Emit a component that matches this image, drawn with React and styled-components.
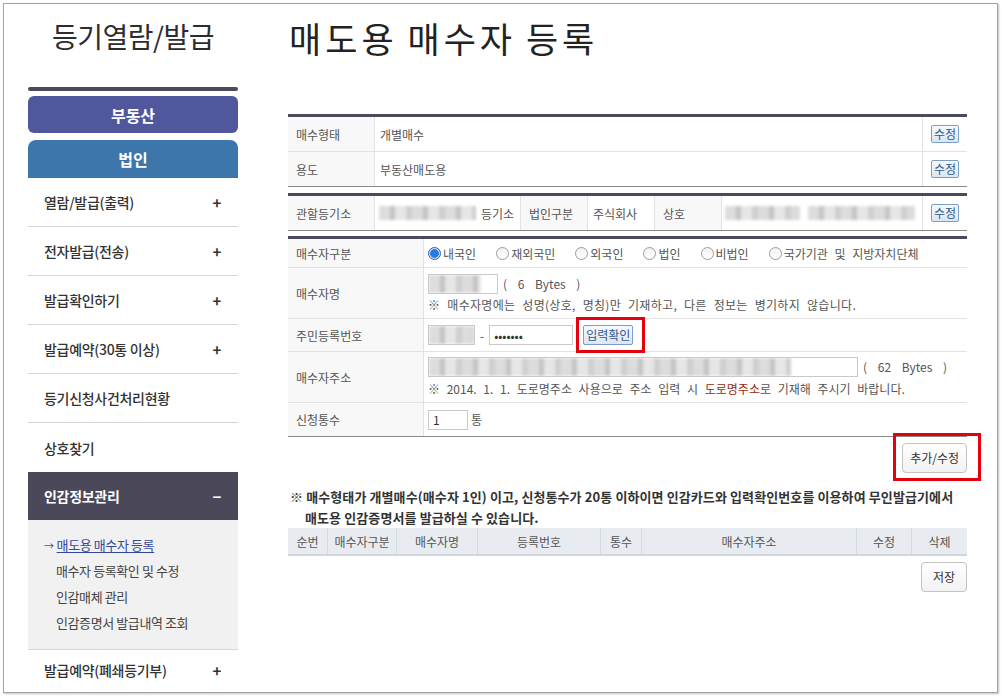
import React from "react";
import styled, { createGlobalStyle } from "styled-components";

const FONT = `"Noto Sans CJK KR", "Noto Sans", sans-serif`;

const GlobalStyle = createGlobalStyle`
  html, body { margin: 0; padding: 0; background: #fff; }
  body { font-family: ${FONT}; color: #333; }
  * { box-sizing: border-box; }
`;

const Frame = styled.div`
  margin: 3px;
  width: 995px;
  height: 690px;
  border: 1px solid #a3a3a3;
  box-shadow: 1px 1px 2px rgba(0, 0, 0, 0.25);
  display: flex;
  padding: 0 29px 0 24px;
  overflow: hidden;
`;

/* ---------- sidebar ---------- */
const Sidebar = styled.aside`
  width: 210px;
  flex: none;
  display: flex;
  flex-direction: column;
`;

const SideTitle = styled.h2`
  margin: 0;
  height: 83px;
  padding-top: 12px;
  font-size: 28px;
  line-height: 40px;
  font-weight: 400;
  letter-spacing: -0.5px;
  text-align: center;
  color: #2d2d2d;
`;

const SideRule = styled.div`
  height: 4px;
  border-radius: 2px;
  background: #4a4a5c;
`;

const CategoryTab = styled.div`
  margin-top: ${(p) => p.$gap}px;
  height: ${(p) => p.$h}px;
  display: flex;
  align-items: center;
  justify-content: center;
  color: #fff;
  font-size: 16px;
  font-weight: 700;
  background: ${(p) => p.$bg};
  border-radius: ${(p) => (p.$flat ? "8px 8px 0 0" : "6px")};
`;

const MenuRow = styled.div`
  height: ${(p) => p.$h || 49}px;
  display: flex;
  align-items: center;
  justify-content: space-between;
  padding: 0 17px 0 16px;
  font-size: 14px;
  color: ${(p) => (p.$open ? "#fff" : "#333")};
  font-weight: ${(p) => (p.$open ? 700 : 500)};
  background: ${(p) => (p.$open ? "#4a4859" : "transparent")};
  border-bottom: ${(p) => (p.$line ? "1px solid #d6d6d6" : "none")};
  letter-spacing: -0.3px;
`;

const Sign = styled.span`
  font-size: 15px;
  font-weight: 700;
  line-height: 1;
`;

const SubList = styled.div`
  background: #f1f1f1;
  padding: 12px 0 13px 16px;
  border-bottom: 1px solid #d6d6d6;
`;

const SubLink = styled.div`
  height: 26px;
  line-height: 26px;
  font-size: 13px;
  letter-spacing: -0.4px;
  color: ${(p) => (p.$active ? "#34489c" : "#444")};
  padding-left: ${(p) => (p.$active ? 0 : 12)}px;

  small {
    font-size: 10px;
    margin-right: 3px;
    color: #555;
  }

  u {
    text-underline-offset: 2px;
  }
`;

/* ---------- main ---------- */
const Main = styled.main`
  width: 679px;
  margin-left: 50px;
  display: flex;
  flex-direction: column;
`;

const PageTitle = styled.h1`
  margin: 0;
  height: 110px;
  padding: 12px 0 0 1px;
  font-size: 35px;
  line-height: 44px;
  font-weight: 400;
  letter-spacing: 4px;
  word-spacing: -2px;
  color: #222;
`;

const FormTable = styled.div`
  border-top: 3px solid #4a4a5c;
  border-bottom: 1px solid #8a8a8a;
  margin-bottom: ${(p) => p.$mb || 0}px;
`;

const Row = styled.div`
  display: flex;
  height: ${(p) => p.$h}px;
  border-bottom: 1px solid #e2e2e2;

  &:last-child {
    border-bottom: none;
  }
`;

const Label = styled.div`
  width: ${(p) => p.$w}px;
  flex: none;
  display: flex;
  align-items: center;
  padding-left: 8px;
  background: #f8f8f8;
  border-right: 1px solid #e2e2e2;
  font-size: 12px;
  color: #555;
`;

const Value = styled.div`
  width: ${(p) => (p.$w ? `${p.$w}px` : "auto")};
  flex: ${(p) => (p.$w ? "none" : 1)};
  display: flex;
  flex-direction: ${(p) => (p.$stack ? "column" : "row")};
  justify-content: ${(p) => (p.$stack ? "center" : "flex-start")};
  align-items: ${(p) => (p.$stack ? "flex-start" : "center")};
  gap: ${(p) => p.$gap || 0}px;
  padding-left: ${(p) => p.$pl ?? 5}px;
  border-right: ${(p) => (p.$line ? "1px solid #e2e2e2" : "none")};
  font-size: 12px;
  word-spacing: 4px;
  color: #555;
`;

const BtnCell = styled.div`
  width: 45px;
  flex: none;
  display: flex;
  align-items: center;
  justify-content: center;
  border-left: 1px solid #e2e2e2;
`;

const Line = styled.div`
  display: flex;
  align-items: center;
  line-height: 16px;
  white-space: pre;
  letter-spacing: ${(p) => p.$ls || 0}px;
`;

const SmallBtn = styled.button`
  height: ${(p) => p.$h || 18}px;
  padding: 0 2px;
  border: 1px solid #7d9ec4;
  border-radius: 2px;
  background: linear-gradient(#f6f9fd, #dbe6f2);
  color: #2e5a8e;
  font: 12px/1 ${FONT};
  cursor: pointer;
`;

const GrayBtn = styled.button`
  height: 30px;
  padding: 0 ${(p) => p.$px}px;
  border: 1px solid #c4c4c4;
  border-radius: 4px;
  background: linear-gradient(#fff, #f2f2f2);
  color: #333;
  font: 12px/1 ${FONT};
  cursor: pointer;
`;

const Highlight = styled.span`
  position: relative;
  display: inline-flex;

  &::after {
    content: "";
    position: absolute;
    top: -${(p) => p.$t}px;
    right: -${(p) => p.$r}px;
    bottom: -${(p) => p.$b}px;
    left: -${(p) => p.$l}px;
    border: 3px solid #e5000c;
    pointer-events: none;
  }
`;

const Blur = styled.span`
  display: inline-block;
  width: ${(p) => p.$w}px;
  height: ${(p) => p.$h || 14}px;
  background: repeating-linear-gradient(
    90deg,
    #dcdcdc 0 11px,
    #c4c4c4 11px 16px,
    #e6e6e6 16px 27px,
    #cfcfcf 27px 33px
  );
  filter: blur(1.6px);
  flex: none;
`;

const FakeInput = styled.div`
  width: ${(p) => p.$w}px;
  height: 20px;
  border: 1px solid #c9c9c9;
  display: flex;
  align-items: center;
  overflow: hidden;
  flex: none;
  background: #fff;
`;

const Field = styled.input`
  width: ${(p) => p.$w}px;
  height: 20px;
  border: 1px solid #c9c9c9;
  padding: 0 4px;
  font: 12px ${FONT};
  color: #333;
  outline: none;
  flex: none;
`;

const Dash = styled.span`
  margin: 0 5px;
`;

const Bytes = styled.span`
  margin-left: 5px;
  word-spacing: 8px;
  color: #555;
`;

const Red = styled.span`
  color: #9a2a06;
`;

const RadioGroup = styled.div`
  display: flex;
  align-items: center;
`;

const Radio = styled.label`
  display: flex;
  align-items: center;
  gap: 2px;
  margin-right: 20px;
  color: #555;
  font-size: 12px;
`;

const RadioDot = styled.span`
  width: 13px;
  height: 13px;
  border-radius: 50%;
  border: 1px solid ${(p) => (p.$on ? "#1c5fb8" : "#9c9c9c")};
  background: ${(p) =>
    p.$on
      ? "radial-gradient(circle, #2a7ae2 0 52%, #d3e4fa 60%)"
      : "linear-gradient(#f1f1f1, #fff)"};
`;

const ConfirmSlot = styled.span`
  margin-left: 10px;
  display: inline-flex;
`;

const ButtonRow = styled.div`
  display: flex;
  justify-content: flex-end;
  margin-top: ${(p) => p.$mt}px;
`;

const Notice = styled.div`
  margin-top: 13px;
  font-size: 13px;
  font-weight: 700;
  line-height: 21px;
  letter-spacing: 0.1px;
  color: #333;
  white-space: nowrap;
  padding-left: 2px;
`;

const Indent = styled.div`
  padding-left: 15px;
`;

const ListHead = styled.div`
  display: grid;
  grid-template-columns: 40px 69px 81px 123px 41px 215px 55px 55px;
  height: 28px;
  background: #e8ecf1;
  border-bottom: 2px solid #cfd6de;
`;

const HeadCell = styled.div`
  display: flex;
  align-items: center;
  justify-content: center;
  font-size: 12px;
  color: #555;
  border-right: 1px solid #d4dae2;

  &:last-child {
    border-right: none;
  }
`;

const menu = [
  { label: "열람/발급(출력)", sign: "+", line: true },
  { label: "전자발급(전송)", sign: "+", line: true },
  { label: "발급확인하기", sign: "+", line: true },
  { label: "발급예약(30통 이상)", sign: "+", line: true },
  { label: "등기신청사건처리현황", line: true },
  { label: "상호찾기" },
];

const subMenu = [
  "매수자 등록확인 및 수정",
  "인감매체 관리",
  "인감증명서 발급내역 조회",
];

const buyerTypes = [
  "내국인",
  "재외국민",
  "외국인",
  "법인",
  "비법인",
  "국가기관 및 지방자치단체",
];

const listCols = [
  "순번",
  "매수자구분",
  "매수자명",
  "등록번호",
  "통수",
  "매수자주소",
  "수정",
  "삭제",
];

export default function App() {
  return (
    <>
      <GlobalStyle />
      <Frame>
        <Sidebar>
          <SideTitle>등기열람/발급</SideTitle>
          <SideRule />
          <CategoryTab $gap={5} $h={37} $bg="#50579d">
            부동산
          </CategoryTab>
          <CategoryTab $gap={7} $h={38} $bg="#3d76ab" $flat>
            법인
          </CategoryTab>
          {menu.map((m) => (
            <MenuRow key={m.label} $line={m.line}>
              <span>{m.label}</span>
              {m.sign && <Sign>{m.sign}</Sign>}
            </MenuRow>
          ))}
          <MenuRow $open $h={48}>
            <span>인감정보관리</span>
            <Sign>−</Sign>
          </MenuRow>
          <SubList>
            <SubLink $active>
              <small>→</small>
              <u>매도용 매수자 등록</u>
            </SubLink>
            {subMenu.map((s) => (
              <SubLink key={s}>{s}</SubLink>
            ))}
          </SubList>
          <MenuRow $h={40}>
            <span>발급예약(폐쇄등기부)</span>
            <Sign>+</Sign>
          </MenuRow>
        </Sidebar>

        <Main>
          <PageTitle>매도용 매수자 등록</PageTitle>

          <FormTable $mb={6}>
            <Row $h={35}>
              <Label $w={87}>매수형태</Label>
              <Value>개별매수</Value>
              <BtnCell>
                <SmallBtn>수정</SmallBtn>
              </BtnCell>
            </Row>
            <Row $h={34}>
              <Label $w={87}>용도</Label>
              <Value>부동산매도용</Value>
              <BtnCell>
                <SmallBtn>수정</SmallBtn>
              </BtnCell>
            </Row>
          </FormTable>

          <FormTable $mb={5}>
            <Row $h={34}>
              <Label $w={87}>관할등기소</Label>
              <Value $w={146} $pl={4} $gap={5} $line>
                <Blur $w={97} />
                <span>등기소</span>
              </Value>
              <Label $w={67}>법인구분</Label>
              <Value $w={67} $line>
                주식회사
              </Value>
              <Label $w={67}>상호</Label>
              <Value $w={200} $pl={3} $gap={8}>
                <Blur $w={75} />
                <Blur $w={107} />
              </Value>
              <BtnCell>
                <SmallBtn>수정</SmallBtn>
              </BtnCell>
            </Row>
          </FormTable>

          <FormTable>
            <Row $h={29}>
              <Label $w={136}>매수자구분</Label>
              <Value $pl={4}>
                <RadioGroup>
                  {buyerTypes.map((t, i) => (
                    <Radio key={t}>
                      <RadioDot $on={i === 0} />
                      {t}
                    </Radio>
                  ))}
                </RadioGroup>
              </Value>
            </Row>
            <Row $h={51}>
              <Label $w={136}>매수자명</Label>
              <Value $stack $pl={4} $gap={3}>
                <Line>
                  <FakeInput $w={70}>
                    <Blur $w={52} $h={18} />
                  </FakeInput>
                  <Bytes>( 6 Bytes )</Bytes>
                </Line>
                <Line $ls={0.3}>
                  ※ 매수자명에는 성명(상호, 명칭)만 기재하고, 다른 정보는 병기하지 않습니다.
                </Line>
              </Value>
            </Row>
            <Row $h={33}>
              <Label $w={136}>주민등록번호</Label>
              <Value $pl={4}>
                <FakeInput $w={47}>
                  <Blur $w={45} $h={18} />
                </FakeInput>
                <Dash>-</Dash>
                <Field $w={84} type="password" value="aaaaaaa" readOnly />
                <ConfirmSlot>
                  <Highlight $t={8} $r={12} $b={8} $l={7}>
                    <SmallBtn $h={20}>입력확인</SmallBtn>
                  </Highlight>
                </ConfirmSlot>
              </Value>
            </Row>
            <Row $h={51}>
              <Label $w={136}>매수자주소</Label>
              <Value $stack $pl={4} $gap={4}>
                <Line>
                  <FakeInput $w={430}>
                    <Blur $w={362} $h={18} />
                  </FakeInput>
                  <Bytes>( 62 Bytes )</Bytes>
                </Line>
                <Line>
                  ※ 2014. 1. 1. 도로명주소 사용으로 주소 입력 시 <Red>도로명주소</Red>로 기재해 주시기 바랍니다.
                </Line>
              </Value>
            </Row>
            <Row $h={33}>
              <Label $w={136}>신청통수</Label>
              <Value $pl={4} $gap={3}>
                <Field $w={40} value="1" readOnly />
                <span>통</span>
              </Value>
            </Row>
          </FormTable>

          <ButtonRow $mt={6}>
            <Highlight $t={10} $r={14} $b={8} $l={9}>
              <GrayBtn $px={7}>추가/수정</GrayBtn>
            </Highlight>
          </ButtonRow>

          <Notice>
            <div>
              ※ 매수형태가 개별매수(매수자 1인) 이고, 신청통수가 20통 이하이면
              인감카드와 입력확인번호를 이용하여 무인발급기에서
            </div>
            <Indent>매도용 인감증명서를 발급하실 수 있습니다.</Indent>
          </Notice>

          <ListHead>
            {listCols.map((c) => (
              <HeadCell key={c}>{c}</HeadCell>
            ))}
          </ListHead>

          <ButtonRow $mt={6}>
            <GrayBtn $px={11}>저장</GrayBtn>
          </ButtonRow>
        </Main>
      </Frame>
    </>
  );
}
